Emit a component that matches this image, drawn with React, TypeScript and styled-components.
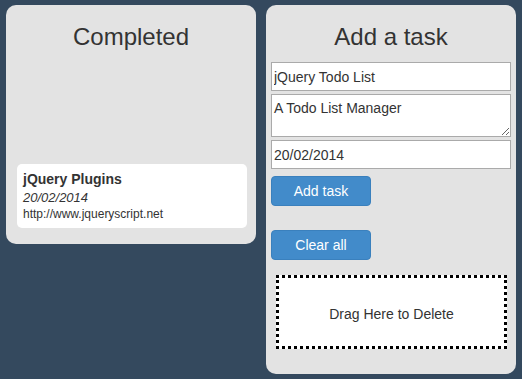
import React from "react";
import styled, { createGlobalStyle } from "styled-components";

const Global = createGlobalStyle`
  html, body { margin: 0; padding: 0; background: #34495e; }
  body { font-family: "Liberation Sans", Arial, sans-serif; color: #333; }
  * { box-sizing: border-box; }
`;

const Page = styled.div`
  display: flex;
  align-items: flex-start;
  gap: 10px;
  padding: 5px 6px;
  min-height: 379px;
  background: #34495e;
`;

const Panel = styled.section<{ $h: number }>`
  width: 250px;
  height: ${(p) => p.$h}px;
  background: #e3e3e3;
  border-radius: 10px;
  padding: 18px 5px 0;
  display: flex;
  flex-direction: column;
`;

const Heading = styled.h2`
  margin: 0 0 11px;
  font-size: 24px;
  line-height: 28px;
  font-weight: normal;
  text-align: center;
  color: #333;
`;

const List = styled.div`
  margin-top: 102px;
  padding: 0 4px 0 6px;
`;

const Card = styled.div`
  background: #fff;
  border-radius: 5px;
  padding: 6px 6px 7px;
  height: 64px;
`;

const CardTitle = styled.div`
  font-weight: bold;
  font-size: 14px;
  line-height: 18px;
`;

const CardDate = styled.div`
  font-style: italic;
  font-size: 13px;
  line-height: 20px;
`;

const CardUrl = styled.div`
  font-size: 12px;
  line-height: 13px;
`;

const Field = styled.input`
  display: block;
  width: 100%;
  height: 29px;
  margin: 0 0 3px;
  padding: 1px 2px;
  border: 1px solid #aaa;
  background: #fff;
  font-family: "Liberation Sans", Arial, sans-serif;
  font-size: 14px;
  color: #333;
  outline: none;
`;

const Area = styled.textarea`
  display: block;
  width: 100%;
  height: 43px;
  margin: 0 0 3px;
  padding: 5px 2px 2px;
  border: 1px solid #aaa;
  background: #fff;
  font-family: "Liberation Sans", Arial, sans-serif;
  font-size: 14px;
  line-height: 16px;
  color: #333;
  outline: none;
`;

const Button = styled.button<{ $mt: number }>`
  display: block;
  width: 100px;
  height: 30px;
  margin-top: ${(p) => p.$mt}px;
  background: #428bca;
  border: 1px solid #3a80bd;
  border-radius: 4px;
  color: #fff;
  font-family: "Liberation Sans", Arial, sans-serif;
  font-size: 14px;
  padding: 0;
`;

const DropZone = styled.div`
  margin: 15px 4px 0 5px;
  height: 74px;
  border: 3px dotted #000;
  background: #fff;
  display: flex;
  align-items: center;
  justify-content: center;
  padding-top: 4px;
  font-size: 14px;
  color: #333;
`;

export default function App() {
  return (
    <>
      <Global />
      <Page>
        <Panel $h={239}>
          <Heading>Completed</Heading>
          <List>
            <Card>
              <CardTitle>jQuery Plugins</CardTitle>
              <CardDate>20/02/2014</CardDate>
              <CardUrl>http://www.jqueryscript.net</CardUrl>
            </Card>
          </List>
        </Panel>
        <Panel $h={369}>
          <Heading>Add a task</Heading>
          <Field type="text" defaultValue="jQuery Todo List" />
          <Area defaultValue="A Todo List Manager" />
          <Field type="text" defaultValue="20/02/2014" />
          <Button $mt={4}>Add task</Button>
          <Button $mt={24}>Clear all</Button>
          <DropZone>Drag Here to Delete</DropZone>
        </Panel>
      </Page>
    </>
  );
}
